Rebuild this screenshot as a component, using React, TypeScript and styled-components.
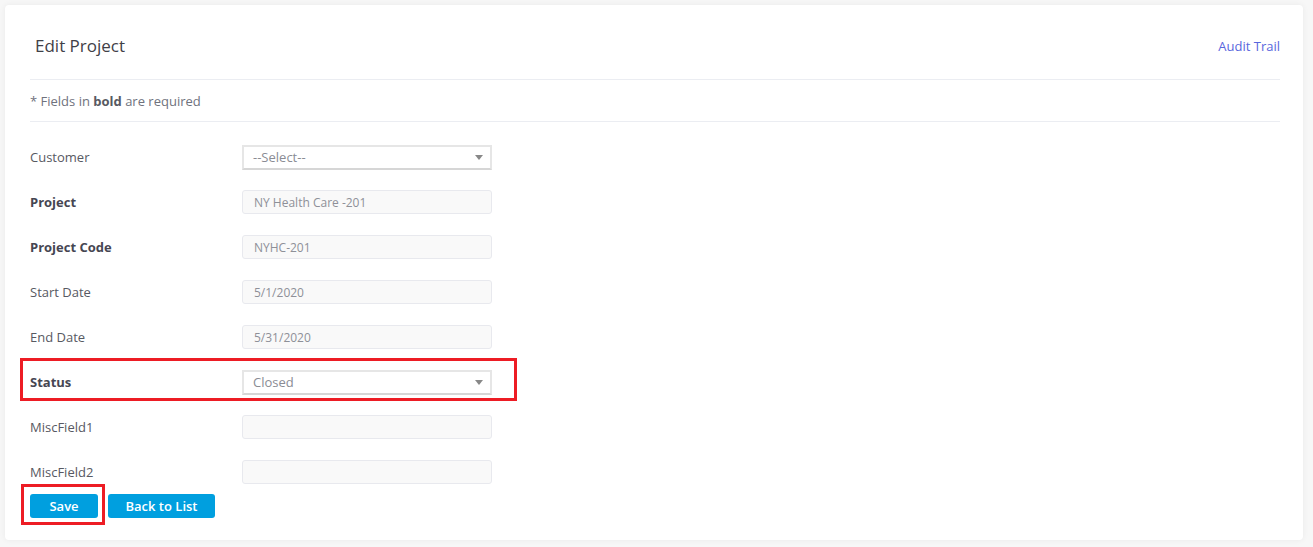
import React from "react";
import styled, { createGlobalStyle } from "styled-components";

const Global = createGlobalStyle`
  html, body { margin: 0; padding: 0; background: #f7f7f7; }
  body { font-family: "Open Sans", "Noto Sans", Arial, sans-serif; }
  * { box-sizing: border-box; }
`;

const Page = styled.div`
  padding: 5px 10px 7px 5px;
`;

const Card = styled.div`
  background: #fff;
  border-radius: 4px;
  box-shadow: 0 0 6px rgba(0, 0, 0, 0.06);
  padding: 0 23px 22px 25px;
  height: 535px;
`;

const Header = styled.div`
  display: flex;
  align-items: center;
  justify-content: space-between;
  height: 75px;
  border-bottom: 1px solid #ebedf2;
  padding: 7px 0 0 5px;
`;

const Title = styled.h3`
  margin: 0;
  font-size: 17px;
  font-weight: 500;
  color: #3f4047;
`;

const Link = styled.a`
  font-size: 13px;
  color: #5867dd;
  text-decoration: none;
  cursor: pointer;
`;

const Note = styled.div`
  height: 42px;
  display: flex;
  align-items: center;
  font-size: 13px;
  color: #6f727d;
  border-bottom: 1px solid #ebedf2;
  b { color: #575962; font-weight: 700; }
`;

const Form = styled.div`
  display: flex;
  flex-direction: column;
  gap: 21px;
  padding-top: 23px;
`;

const Row = styled.div<{ $highlight?: boolean }>`
  display: flex;
  align-items: center;
  height: 24px;
  width: 462px;
  position: relative;
  ${(p) =>
    p.$highlight &&
    `
    &::after {
      content: "";
      position: absolute;
      top: -12px; left: -10px; right: -25px; bottom: -7px;
      border: 3px solid #ed1c24;
      pointer-events: none;
    }
  `}
`;

const Label = styled.label<{ $required?: boolean }>`
  width: 212px;
  flex: none;
  font-size: 13px;
  color: ${(p) => (p.$required ? "#464652" : "#575962")};
  font-weight: ${(p) => (p.$required ? 700 : 400)};
`;

const Input = styled.div`
  width: 250px;
  height: 24px;
  background: #f9f9f9;
  border: 1px solid #e8e9ee;
  border-radius: 3px;
  padding: 0 11px;
  display: flex;
  align-items: center;
  font-size: 12px;
  color: #8e9098;
`;

const Select = styled.div`
  width: 250px;
  height: 25px;
  background: #fff;
  border: 2px solid #e6e6e6;
  border-bottom-color: #d6d6d6;
  padding: 0 9px;
  display: flex;
  align-items: center;
  justify-content: space-between;
  font-size: 13px;
  color: #8a8c94;
`;

const Caret = styled.span`
  width: 0;
  height: 0;
  border-left: 4px solid transparent;
  border-right: 4px solid transparent;
  border-top: 5px solid #888;
  margin-right: -2px;
`;

const Buttons = styled.div`
  display: flex;
  gap: 10px;
  margin-top: -11px;
`;

const ButtonWrap = styled.div<{ $highlight?: boolean }>`
  position: relative;
  ${(p) =>
    p.$highlight &&
    `
    &::after {
      content: "";
      position: absolute;
      top: -10px; left: -9px; right: -7px; bottom: -7px;
      border: 3px solid #ed1c24;
      pointer-events: none;
    }
  `}
`;

const Button = styled.button<{ $w: number }>`
  width: ${(p) => p.$w}px;
  height: 24px;
  background: #009fdf;
  color: #fff;
  border: none;
  border-radius: 3px;
  font-family: inherit;
  font-size: 13px;
  font-weight: 600;
  padding: 0;
  cursor: pointer;
`;

export default function App() {
  return (
    <Page>
      <Global />
      <Card>
        <Header>
          <Title>Edit Project</Title>
          <Link>Audit Trail</Link>
        </Header>
        <Note>
          <span>
            * Fields in <b>bold</b> are required
          </span>
        </Note>
        <Form>
          <Row>
            <Label>Customer</Label>
            <Select>
              <span>--Select--</span>
              <Caret />
            </Select>
          </Row>
          <Row>
            <Label $required>Project</Label>
            <Input>NY Health Care -201</Input>
          </Row>
          <Row>
            <Label $required>Project Code</Label>
            <Input>NYHC-201</Input>
          </Row>
          <Row>
            <Label>Start Date</Label>
            <Input>5/1/2020</Input>
          </Row>
          <Row>
            <Label>End Date</Label>
            <Input>5/31/2020</Input>
          </Row>
          <Row $highlight>
            <Label $required>Status</Label>
            <Select>
              <span>Closed</span>
              <Caret />
            </Select>
          </Row>
          <Row>
            <Label>MiscField1</Label>
            <Input />
          </Row>
          <Row>
            <Label>MiscField2</Label>
            <Input />
          </Row>
          <Buttons>
            <ButtonWrap $highlight>
              <Button $w={68}>Save</Button>
            </ButtonWrap>
            <ButtonWrap>
              <Button $w={107}>Back to List</Button>
            </ButtonWrap>
          </Buttons>
        </Form>
      </Card>
    </Page>
  );
}
